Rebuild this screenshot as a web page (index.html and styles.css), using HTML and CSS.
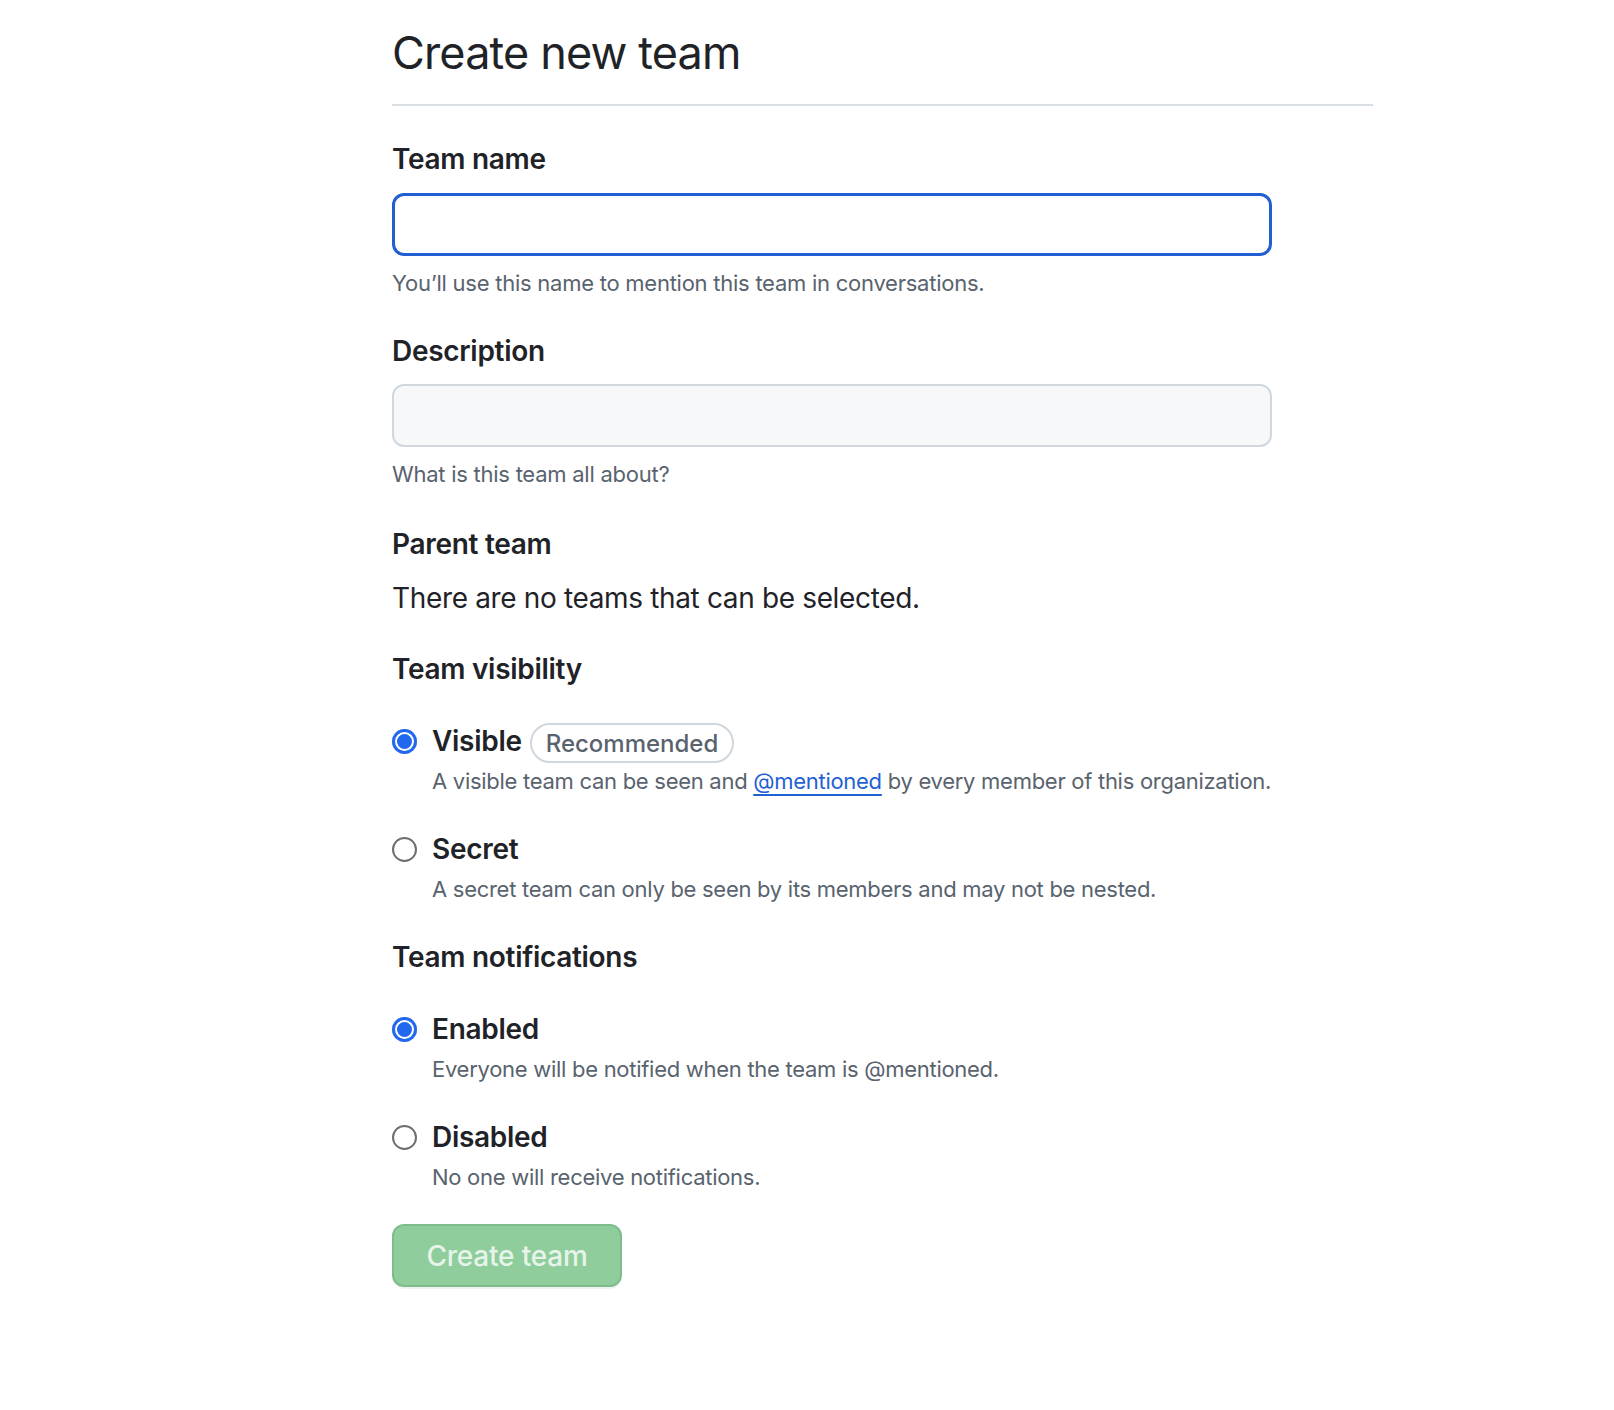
FILE: index.html
```html
<!DOCTYPE html>
<html lang="en">
<head>
<meta charset="utf-8">
<title>Create new team</title>
<link rel="stylesheet" href="styles.css">
</head>
<body>
<main class="page">
  <h1 class="subhead">Create new team</h1>
  <form class="form">
    <div class="group group-first">
      <label class="label" for="team-name">Team name</label>
      <input class="field field-focus" id="team-name" type="text">
      <p class="note">You’ll use this name to mention this team in conversations.</p>
    </div>
    <div class="group group-desc">
      <label class="label" for="team-desc">Description</label>
      <input class="field field-muted" id="team-desc" type="text">
      <p class="note">What is this team all about?</p>
    </div>
    <div class="group group-parent">
      <div class="label">Parent team</div>
      <p class="plain">There are no teams that can be selected.</p>
    </div>
    <div class="group">
      <div class="label">Team visibility</div>
      <div class="option option-first">
        <label class="option-row"><input class="radio" type="radio" name="vis" checked><span class="option-title">Visible</span><span class="badge">Recommended</span></label>
        <p class="option-note">A visible team can be seen and <a class="link" href="#">@mentioned</a> by every member of this organization.</p>
      </div>
      <div class="option">
        <label class="option-row"><input class="radio" type="radio" name="vis"><span class="option-title">Secret</span></label>
        <p class="option-note">A secret team can only be seen by its members and may not be nested.</p>
      </div>
    </div>
    <div class="group group-tight">
      <div class="label">Team notifications</div>
      <div class="option option-first">
        <label class="option-row"><input class="radio" type="radio" name="notif" checked><span class="option-title">Enabled</span></label>
        <p class="option-note">Everyone will be notified when the team is @mentioned.</p>
      </div>
      <div class="option">
        <label class="option-row"><input class="radio" type="radio" name="notif"><span class="option-title">Disabled</span></label>
        <p class="option-note">No one will receive notifications.</p>
      </div>
    </div>
    <div class="actions">
      <button class="btn" type="button" disabled>Create team</button>
    </div>
  </form>
</main>
</body>
</html>
```

FILE: styles.css
```css
* { box-sizing: border-box; }

html, body {
  margin: 0;
  padding: 0;
  background: #ffffff;
}

body {
  font-family: Inter, "Noto Sans", "Liberation Sans", sans-serif;
  color: #1f2328;
}

.page {
  margin-left: 392px;
  width: 981px;
  padding-top: 23px;
  padding-bottom: 80px;
}

.subhead {
  margin: 0;
  font-size: 45px;
  font-weight: 400;
  line-height: 60px;
  letter-spacing: -0.85px;
  padding-bottom: 21px;
  border-bottom: 2px solid #d8dee4;
}

.form { margin: 0; }

.group { margin-top: 31px; }
.group-first { margin-top: 33px; }
.group-desc { margin-top: 30px; }
.group-parent { margin-top: 32px; }
.group-tight { margin-top: 29px; }

.label {
  display: block;
  font-size: 28px;
  font-weight: 600;
  line-height: 40px;
  letter-spacing: -0.3px;
}

.field {
  display: block;
  width: 880px;
  height: 63px;
  margin-top: 14px;
  padding: 0 16px;
  font: inherit;
  font-size: 28px;
  border-radius: 12px;
  outline: none;
  -webkit-appearance: none;
  appearance: none;
}

.field-focus {
  background: #ffffff;
  border: 3px solid #1f5fd1;
}

.field-muted {
  background: #f6f8fa;
  border: 2px solid #d0d7de;
  margin-top: 13px;
}

.note {
  margin: 9px 0 0;
  font-size: 22px;
  line-height: 36px;
  letter-spacing: -0.25px;
  color: #59636e;
}

.plain {
  margin: 14px 0 0;
  font-size: 28px;
  line-height: 40px;
  letter-spacing: -0.35px;
  color: #1f2328;
}

.option { margin-top: 27px; }
.option-first { margin-top: 30px; }

.option-row {
  display: flex;
  align-items: center;
  height: 44px;
}

.radio {
  -webkit-appearance: none;
  appearance: none;
  margin: 0 15px 0 0;
  width: 25px;
  height: 25px;
  flex: none;
  border-radius: 50%;
  border: 2px solid #6e6e6e;
  background: #ffffff;
}

.radio:checked {
  border: none;
  background: #2168ef;
  box-shadow: inset 0 0 0 3px #2168ef, inset 0 0 0 5px #ffffff;
}

.option-title {
  font-size: 28px;
  font-weight: 600;
  line-height: 44px;
  letter-spacing: -0.3px;
}

.badge {
  display: inline-flex;
  align-items: center;
  height: 40px;
  margin-left: 8px;
  margin-top: 4px;
  padding: 0 14px;
  border: 2px solid #d0d7de;
  border-radius: 999px;
  font-size: 24px;
  font-weight: 500;
  color: #59636e;
}

.option-note {
  margin: 0 0 0 40px;
  font-size: 22px;
  line-height: 37px;
  letter-spacing: -0.28px;
  color: #59636e;
}

.link {
  color: #1f62d3;
  text-decoration: underline;
  text-underline-offset: 5px;
  text-decoration-thickness: 2px;
}

.actions { margin-top: 28px; }

.btn {
  display: inline-flex;
  align-items: center;
  justify-content: center;
  height: 63px;
  width: 230px;
  padding: 0;
  white-space: nowrap;
  font: inherit;
  font-size: 28px;
  font-weight: 500;
  letter-spacing: -0.2px;
  color: rgba(255, 255, 255, 0.8);
  background: #8fcd9d;
  border: 2px solid #7dbd8b;
  border-radius: 12px;
  box-shadow: 0 2px 0 rgba(27, 31, 36, 0.06);
}
```
